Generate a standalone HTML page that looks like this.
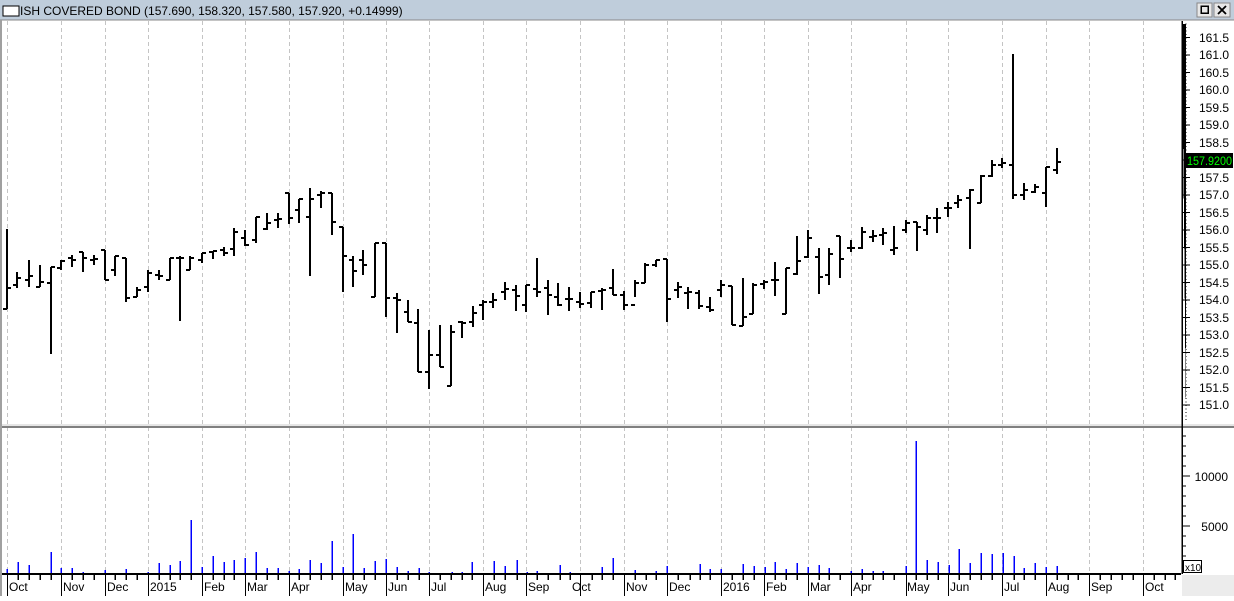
<!DOCTYPE html>
<html><head><meta charset="utf-8"><style>
html,body{margin:0;padding:0;background:#fff;}
body{width:1234px;height:596px;overflow:hidden;position:relative;font-family:"Liberation Sans",sans-serif;}
svg text{font-family:"Liberation Sans",sans-serif;}
</style></head><body>
<svg width="1234" height="596" viewBox="0 0 1234 596" xmlns="http://www.w3.org/2000/svg" shape-rendering="crispEdges">
<rect x="0" y="0" width="1234" height="596" fill="#fff"/>
<rect x="0" y="0" width="1234" height="20" fill="#bfcddb"/>
<rect x="3" y="6" width="16" height="10" fill="#fff" stroke="#000" stroke-width="1"/>
<text x="20" y="15" font-size="12" fill="#000">ISH COVERED BOND <tspan font-size="12">(157.690, 158.320, 157.580, 157.920, +0.14999)</tspan></text>
<rect x="1197" y="3" width="15" height="14" fill="#e8e8e8" stroke="#888"/>
<rect x="1201" y="6" width="7" height="7" fill="none" stroke="#000" stroke-width="1.5"/>
<rect x="1214" y="3" width="16" height="14" fill="#e8e8e8" stroke="#888"/>
<path d="M1218 6 L1226 14 M1226 6 L1218 14" stroke="#000" stroke-width="1.8" shape-rendering="auto"/>
<line x1="0" y1="20" x2="1234" y2="20" stroke="#888"/>
<rect x="0" y="20" width="2" height="576" fill="#a0a0a0"/>
<g stroke="#c4c4c4" stroke-width="1" stroke-dasharray="4,3">
<path d="M7.5 21V573 M61.5 21V573 M105.5 21V573 M148.5 21V573 M202.5 21V573 M245.5 21V573 M289.5 21V573 M343.5 21V573 M386.5 21V573 M429.5 21V573 M483.5 21V573 M526.5 21V573 M580.5 21V573 M624.5 21V573 M667.5 21V573 M721.5 21V573 M764.5 21V573 M808.5 21V573 M851.5 21V573 M906.5 21V573 M948.5 21V573 M1002.5 21V573 M1046.5 21V573 M1089.5 21V573 M1143.5 21V573"/>
</g>
<rect x="2" y="424" width="1232" height="2" fill="#e6e6e6"/>
<rect x="2" y="426" width="1232" height="2" fill="#808080"/>
<path fill="none" stroke="#000" stroke-width="2" d="
M7 229V309M3 309H7M7 288H11
M17 272V288M13 285H17M17 278H21
M29 260V287M25 280H29M29 276H33
M40 265V287M36 287H40M40 282H44
M51 267V354M47 283H51M51 267H55
M61 260V270M57 268H61M61 261H65
M72 255V267M68 258H72M72 260H76
M83 252V272M79 252H83M83 258H87
M94 255V265M90 260H94M94 259H98
M105 250V280M101 250H105M105 280H109
M115 256V276M111 270H115M115 256H119
M126 258V302M122 258H126M126 298H130
M137 287V297M133 297H137M137 290H141
M148 270V292M144 287H148M148 273H152
M159 270V280M155 275H159M159 276H163
M170 258V280M166 280H170M170 258H174
M180 256V321M176 258H180M180 258H184
M190 256V270M186 270H190M190 258H194
M202 253V263M198 260H202M202 253H206
M213 251V259M209 252H213M213 251H217
M224 247V256M220 250H224M224 253H228
M234 228V256M230 249H234M234 232H238
M245 230V246M241 238H245M245 245H249
M256 217V243M252 240H256M256 217H260
M267 213V230M263 229H267M267 223H271
M278 213V228M274 220H278M278 219H282
M289 193V224M285 193H289M289 218H293
M299 199V223M295 210H299M299 199H303
M310 188V276M306 217H310M310 199H314
M321 191V208M317 195H321M321 193H325
M332 193V235M328 193H332M332 222H336
M343 227V292M339 227H343M343 256H347
M353 256V287M349 260H353M353 271H357
M363 250V275M359 260H363M363 265H367
M375 243V297M371 297H375M375 243H379
M386 243V317M382 243H386M386 298H390
M397 293V333M393 298H397M397 300H401
M408 300V322M404 312H408M408 322H412
M418 309V372M414 323H418M418 372H422
M429 330V389M425 372H429M429 355H433
M440 325V367M436 355H440M440 367H444
M451 325V386M447 386H451M451 332H455
M462 321V338M458 322H462M462 323H466
M473 306V327M469 322H473M473 313H477
M483 300V320M479 305H483M483 302H487
M493 293V308M489 302H493M493 300H497
M505 282V300M501 292H505M505 289H509
M516 285V311M512 290H516M516 296H520
M526 285V312M522 305H526M526 285H530
M537 258V297M533 289H537M537 292H541
M548 280V315M544 288H548M548 295H552
M558 283V306M554 297H558M558 305H562
M569 287V311M565 299H569M569 299H573
M580 292V308M576 302H580M580 304H584
M591 292V308M587 303H591M591 292H595
M602 288V310M598 291H602M602 290H606
M613 269V295M609 288H613M613 295H617
M624 291V310M620 295H624M624 305H628
M635 280V297M631 305H635M635 283H639
M645 263V283M641 283H645M645 265H649
M656 260V267M652 265H656M656 260H660
M667 259V322M663 259H667M667 299H671
M678 282V298M674 290H678M678 287H682
M688 287V309M684 293H688M688 292H692
M699 290V309M695 293H699M699 306H703
M710 297V312M706 307H710M710 310H714
M721 280V297M717 290H721M721 285H725
M732 286V325M728 286H732M732 325H736
M743 278V326M739 326H743M743 317H747
M753 283V314M749 314H753M753 285H757
M764 280V289M760 284H764M764 282H768
M775 262V296M771 280H775M775 280H779
M786 268V314M782 314H786M786 268H790
M797 236V275M793 274H797M797 261H801
M808 230V258M804 257H808M808 238H812
M819 248V294M815 257H819M819 277H823
M829 248V285M825 275H829M829 254H833
M840 236V278M836 236H840M840 259H844
M851 240V252M847 248H851M851 248H855
M862 227V249M858 248H862M862 232H866
M873 230V242M869 237H873M873 236H877
M883 228V245M879 235H883M883 233H887
M894 226V255M890 250H894M894 248H898
M906 220V233M902 230H906M906 223H910
M917 222V251M913 222H917M917 227H921
M927 215V235M923 230H927M927 218H931
M937 208V233M933 218H937M937 218H941
M948 202V217M944 208H948M948 208H952
M958 195V208M954 203H958M958 200H962
M970 189V249M966 198H970M970 190H974
M981 175V203M977 203H981M981 176H985
M992 160V177M988 176H992M992 165H996
M1002 158V168M998 165H1002M1002 163H1006
M1013 54V199M1009 165H1013M1013 195H1017
M1024 183V200M1020 195H1024M1024 190H1028
M1035 184V193M1031 192H1035M1035 187H1039
M1046 167V207M1042 193H1046M1046 167H1050
M1057 148V174M1053 170H1057M1057 162H1061
"/>
<path fill="none" stroke="#0000ff" stroke-width="1.5" d="
M7 574V569M18 574V562M29 574V565M40 574V573M51 574V552M61 574V568M72 574V568M83 574V572M94 574V573M105 574V570M115 574V573M126 574V569M137 574V573M148 574V572M159 574V563M170 574V565M180 574V561M191 574V520M202 574V567M213 574V556M224 574V562M234 574V560M245 574V558M256 574V552M267 574V568M278 574V568M289 574V571M299 574V569M310 574V560M321 574V563M332 574V541M343 574V567M353 574V534M364 574V568M375 574V561M386 574V559M397 574V567M408 574V571M419 574V568M429 574V572M452 574V572M462 574V572M472 574V562M494 574V561M505 574V566M517 574V560M527 574V572M537 574V571M560 574V565M570 574V572M592 574V573M602 574V567M613 574V558M635 574V570M656 574V571M667 574V566M690 574V573M700 574V564M710 574V569M721 574V569M743 574V564M754 574V566M765 574V567M775 574V562M786 574V569M797 574V563M808 574V567M819 574V565M829 574V568M840 574V573M851 574V571M862 574V569M873 574V571M883 574V571M906 574V566M916 574V441M927 574V560M938 574V562M949 574V565M959 574V549M970 574V563M981 574V553M992 574V554M1003 574V553M1014 574V556M1024 574V568M1035 574V563M1046 574V567M1057 574V566"/>
<rect x="2" y="574" width="1180" height="22" fill="#fff"/>
<line x1="2" y1="574" x2="1181" y2="574" stroke="#000" stroke-width="2"/>
<path stroke="#000" stroke-width="1" d="M7.5 574V596M61.5 574V596M105.5 574V596M148.5 574V596M202.5 574V596M245.5 574V596M289.5 574V596M343.5 574V596M386.5 574V596M429.5 574V596M483.5 574V596M526.5 574V596M580.5 574V596M624.5 574V596M667.5 574V596M721.5 574V596M764.5 574V596M808.5 574V596M851.5 574V596M906.5 574V596M948.5 574V596M1002.5 574V596M1046.5 574V596M1089.5 574V596M1143.5 574V596"/>
<path stroke="#000" stroke-width="1.5" d="M18 574V580M29 574V580M40 574V580M51 574V580M72 574V580M83 574V580M94 574V580M115 574V580M126 574V580M137 574V580M159 574V580M170 574V580M180 574V580M191 574V580M213 574V580M224 574V580M234 574V580M256 574V580M267 574V580M278 574V580M299 574V580M310 574V580M321 574V580M332 574V580M353 574V580M364 574V580M375 574V580M397 574V580M408 574V580M419 574V580M440 574V580M451 574V580M462 574V580M472 574V580M494 574V580M505 574V580M517 574V580M537 574V580M548 574V580M560 574V580M570 574V580M592 574V580M602 574V580M613 574V580M635 574V580M646 574V580M656 574V580M678 574V580M690 574V580M700 574V580M710 574V580M732 574V580M743 574V580M754 574V580M775 574V580M786 574V580M797 574V580M819 574V580M829 574V580M840 574V580M862 574V580M873 574V580M883 574V580M894 574V580M916 574V580M927 574V580M938 574V580M959 574V580M970 574V580M981 574V580M992 574V580M1014 574V580M1024 574V580M1035 574V580M1057 574V580M1068 574V580M1078 574V580M1100 574V580M1111 574V580M1122 574V580M1133 574V580M1154 574V580M1165 574V580M1175 574V580"/>
<g font-size="12" fill="#000">
<text x="9" y="591">Oct</text><text x="63" y="591">Nov</text><text x="107" y="591">Dec</text><text x="150" y="591">2015</text><text x="204" y="591">Feb</text><text x="247" y="591">Mar</text><text x="291" y="591">Apr</text><text x="345" y="591">May</text><text x="388" y="591">Jun</text><text x="431" y="591">Jul</text><text x="485" y="591">Aug</text><text x="528" y="591">Sep</text><text x="572" y="591">Oct</text><text x="626" y="591">Nov</text><text x="669" y="591">Dec</text><text x="723" y="591">2016</text><text x="766" y="591">Feb</text><text x="810" y="591">Mar</text><text x="853" y="591">Apr</text><text x="907" y="591">May</text><text x="950" y="591">Jun</text><text x="1004" y="591">Jul</text><text x="1048" y="591">Aug</text><text x="1091" y="591">Sep</text><text x="1145" y="591">Oct</text>
</g>
<rect x="1182" y="575" width="52" height="21" fill="#ececec"/>
<line x1="1182" y1="21" x2="1182" y2="574" stroke="#000" stroke-width="1.5"/>
<path stroke="#000" stroke-width="1" d="M1182 37.5H1190M1182 55H1190M1182 72.5H1190M1182 90H1190M1182 107.5H1190M1182 125H1190M1182 142.5H1190M1182 160H1190M1182 177.5H1190M1182 195H1190M1182 212.5H1190M1182 230H1190M1182 247.5H1190M1182 265H1190M1182 282.5H1190M1182 300H1190M1182 317.5H1190M1182 335H1190M1182 352.5H1190M1182 370H1190M1182 387.5H1190M1182 405H1190"/>
<path stroke="#000" stroke-width="1" stroke-dasharray="1,2.5" d="M1182 24H1186V422"/>
<g font-size="12" fill="#000" text-anchor="end">
<text x="1229" y="42">161.5</text><text x="1229" y="59">161.0</text><text x="1229" y="77">160.5</text><text x="1229" y="94">160.0</text><text x="1229" y="112">159.5</text><text x="1229" y="129">159.0</text><text x="1229" y="147">158.5</text><text x="1229" y="182">157.5</text><text x="1229" y="199">157.0</text><text x="1229" y="217">156.5</text><text x="1229" y="234">156.0</text><text x="1229" y="252">155.5</text><text x="1229" y="269">155.0</text><text x="1229" y="287">154.5</text><text x="1229" y="304">154.0</text><text x="1229" y="322">153.5</text><text x="1229" y="339">153.0</text><text x="1229" y="357">152.5</text><text x="1229" y="374">152.0</text><text x="1229" y="392">151.5</text><text x="1229" y="409">151.0</text>
</g>
<rect x="1186" y="153" width="47" height="15" fill="#000"/>
<text x="1187" y="165" font-size="12" fill="#00ff00" textLength="45" lengthAdjust="spacingAndGlyphs">157.9200</text>
<path stroke="#000" stroke-width="1" d="M1182 476H1190M1182 526H1190M1182 436H1186M1182 446H1186M1182 456H1186M1182 466H1186M1182 486H1186M1182 496H1186M1182 506H1186M1182 516H1186M1182 536H1186M1182 546H1186M1182 556H1186M1182 566H1186"/>
<g font-size="12" fill="#000" text-anchor="end">
<text x="1228" y="481">10000</text><text x="1228" y="531">5000</text>
</g>
<rect x="1183.5" y="560.5" width="18" height="12" fill="#fff" stroke="#000"/>
<text x="1185" y="571" font-size="10" fill="#000">x10</text>
</svg>
</body></html>
